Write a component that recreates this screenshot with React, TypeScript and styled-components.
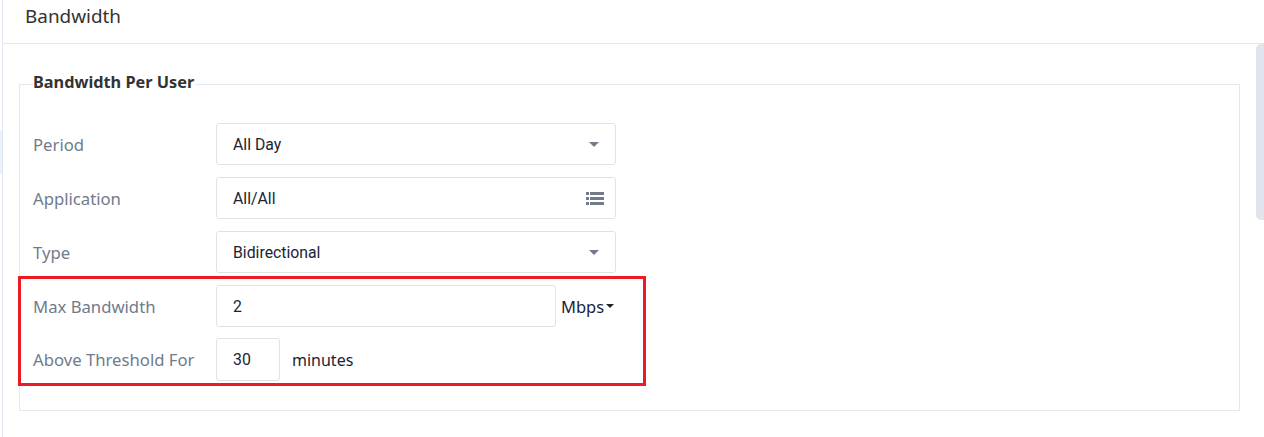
import React from "react";
import styled, { createGlobalStyle } from "styled-components";

const Global = createGlobalStyle`
  html, body { margin: 0; padding: 0; background: #fff; }
  body { font-family: "Noto Sans", "Open Sans", sans-serif; overflow: hidden; }
`;

const Page = styled.div`
  position: relative;
  width: 1264px;
  height: 437px;
  overflow: hidden;
  display: flex;
  background: #fff;
`;

const Gutter = styled.div`
  width: 2px;
  flex: none;
  display: flex;
  flex-direction: column;
  padding-top: 131px;
`;

const GutterTint = styled.div`
  height: 43px;
  background: #e8f1fc;
`;

const Main = styled.div`
  flex: 1;
  border-left: 1px solid #e3e7f0;
  display: flex;
  flex-direction: column;
  min-width: 0;
`;

const Header = styled.div`
  height: 43px;
  border-bottom: 1px solid #e3e7f0;
  box-sizing: content-box;
  padding-left: 22px;
  font-size: 18.9px;
  line-height: 33px;
  color: #333;
`;

const Scroller = styled.div`
  position: relative;
  flex: 1;
  padding: 30px 24px 0 16px;
`;

const Thumb = styled.div`
  position: absolute;
  right: 0;
  top: 0;
  width: 8px;
  height: 176px;
  background: #e1e4ed;
  border-radius: 5px 0 0 5px;
`;

const Group = styled.fieldset`
  margin: 0;
  padding: 0 13px;
  height: 337px;
  box-sizing: border-box;
  border: 1px solid #e3e7f0;
  min-width: 0;
`;

const Legend = styled.legend`
  padding: 0 1px 4px 0;
  font-size: 16.3px;
  line-height: 16px;
  font-weight: 700;
  color: #333;
`;

const Rows = styled.div`
  display: flex;
  flex-direction: column;
  gap: 12px;
  padding-top: 29px;
`;

const Row = styled.div<{ $tight?: boolean }>`
  display: flex;
  align-items: center;
  height: ${(p) => (p.$tight ? 43 : 42)}px;
  margin-top: ${(p) => (p.$tight ? -1 : 0)}px;
`;

const Label = styled.label`
  width: 183px;
  flex: none;
  font-size: 16.7px;
  color: #707b8c;
`;

const Field = styled.div<{ $w: number }>`
  width: ${(p) => p.$w}px;
  height: 100%;
  box-sizing: border-box;
  flex: none;
  display: flex;
  align-items: center;
  justify-content: space-between;
  padding: 0 14px 0 16px;
  border: 1px solid #e2e2e2;
  border-radius: 3px;
  background: #fff;
  font-family: Roboto, "Noto Sans", sans-serif;
  font-size: 15.8px;
  color: #1a2433;
`;

const Caret = styled.span`
  width: 0;
  height: 0;
  margin-right: 2px;
  border-left: 5px solid transparent;
  border-right: 5px solid transparent;
  border-top: 5px solid #737b8a;
`;

const Unit = styled.span`
  margin-left: 5px;
  font-size: 16.5px;
  color: #1a2433;
  display: flex;
  align-items: center;
  gap: 2px;
`;

const UnitCaret = styled.span`
  width: 0;
  height: 0;
  border-left: 4px solid transparent;
  border-right: 4px solid transparent;
  border-top: 4px solid #222;
`;

const Suffix = styled.span`
  margin-left: 12px;
  font-size: 16px;
  color: #1a2433;
`;

const Highlight = styled.div`
  position: absolute;
  left: 18px;
  top: 276px;
  width: 628px;
  height: 110px;
  box-sizing: border-box;
  border: 3px solid #ed1c24;
  pointer-events: none;
`;

const ListSvg = styled.svg`
  flex: none;
  margin-right: -3px;
`;

const ListIcon = () => (
  <ListSvg width="18" height="15" viewBox="0 0 18 15">
    <g fill="#737b8a">
      <rect x="0" y="1" width="3" height="3" />
      <rect x="0" y="6" width="3" height="3" />
      <rect x="0" y="11" width="3" height="3" />
      <rect x="4" y="1" width="14" height="3" />
      <rect x="4" y="6" width="14" height="3" />
      <rect x="4" y="11" width="14" height="3" />
    </g>
  </ListSvg>
);

export default function App() {
  return (
    <Page>
      <Global />
      <Gutter>
        <GutterTint />
      </Gutter>
      <Main>
        <Header>Bandwidth</Header>
        <Scroller>
          <Thumb />
          <Group>
            <Legend>Bandwidth Per User</Legend>
            <Rows>
              <Row>
                <Label>Period</Label>
                <Field $w={400}>
                  All Day
                  <Caret />
                </Field>
              </Row>
              <Row>
                <Label>Application</Label>
                <Field $w={400}>
                  All/All
                  <ListIcon />
                </Field>
              </Row>
              <Row>
                <Label>Type</Label>
                <Field $w={400}>
                  Bidirectional
                  <Caret />
                </Field>
              </Row>
              <Row>
                <Label>Max Bandwidth</Label>
                <Field $w={340}>2</Field>
                <Unit>
                  Mbps
                  <UnitCaret />
                </Unit>
              </Row>
              <Row $tight>
                <Label>Above Threshold For</Label>
                <Field $w={64}>30</Field>
                <Suffix>minutes</Suffix>
              </Row>
            </Rows>
          </Group>
        </Scroller>
      </Main>
      <Highlight />
    </Page>
  );
}
